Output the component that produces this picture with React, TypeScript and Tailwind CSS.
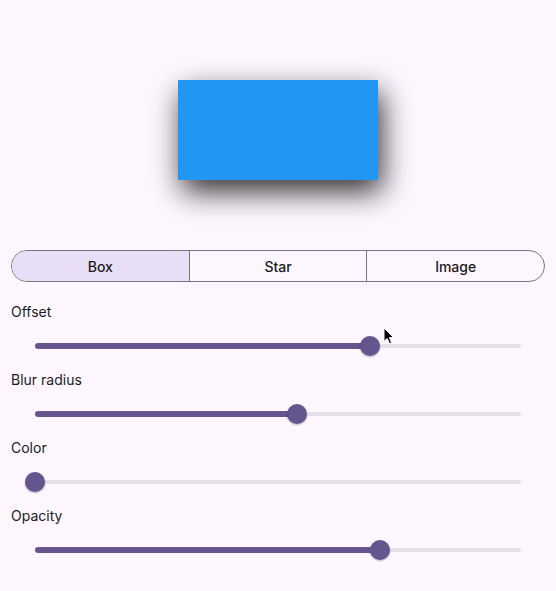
import React from "react";

function Slider({ label, value }: { label: string; value: number }) {
  const pct = value * 100;
  return (
    <div className="flex flex-col">
      <div className="h-[20px] text-[14px] leading-[20px] text-[#1d1b20]">{label}</div>
      <div className="relative h-[48px] mx-[24px]">
        <div className="absolute left-0 right-0 top-1/2 -translate-y-1/2 h-[4px] rounded-full bg-[#e6e0e9]" />
        <div
          className="absolute left-0 top-1/2 -translate-y-1/2 h-[6px] rounded-full bg-[#65558f]"
          style={{ width: `${pct}%` }}
        />
        <div
          className="absolute top-1/2 -translate-y-1/2 -translate-x-1/2 w-[20px] h-[20px] rounded-full bg-[#65558f] shadow-[0_1px_2px_rgba(0,0,0,0.3)]"
          style={{ left: `${pct}%` }}
        />
      </div>
    </div>
  );
}

export default function App() {
  const segs = ["Box", "Star", "Image"];
  return (
    <div
      className="relative w-[556px] h-[591px] bg-[#fef7ff] px-[11px] overflow-hidden"
      style={{ fontFamily: "Inter, Roboto, 'Noto Sans', sans-serif" }}
    >
      <div className="flex justify-center pt-[80px] h-[250px]">
        <div className="w-[200px] h-[100px] bg-[#2196f3] shadow-[4px_12px_28px_rgba(0,0,0,0.8)]" />
      </div>
      <div className="flex h-[32px] rounded-full border border-[#79747e] overflow-hidden">
        {segs.map((s, i) => (
          <div
            key={s}
            className={
              "flex-1 flex items-center justify-center text-[14px] font-medium text-[#1d1b20] " +
              (i === 0 ? "bg-[#e8def8] " : "") +
              (i > 0 ? "border-l border-[#79747e]" : "")
            }
          >
            {s}
          </div>
        ))}
      </div>
      <div className="flex flex-col mt-[20px]">
        <Slider label="Offset" value={0.689} />
        <Slider label="Blur radius" value={0.539} />
        <Slider label="Color" value={0} />
        <Slider label="Opacity" value={0.71} />
      </div>
      <svg
        className="absolute left-[383px] top-[327px]"
        width="12"
        height="18"
        viewBox="0 0 12 18"
      >
        <path
          d="M1 1 L1 14.5 L4.2 11.4 L6.4 16.6 L8.6 15.7 L6.4 10.6 L10.6 10.6 Z"
          fill="#000"
          stroke="#fff"
          strokeWidth="1"
          strokeLinejoin="round"
        />
      </svg>
    </div>
  );
}
